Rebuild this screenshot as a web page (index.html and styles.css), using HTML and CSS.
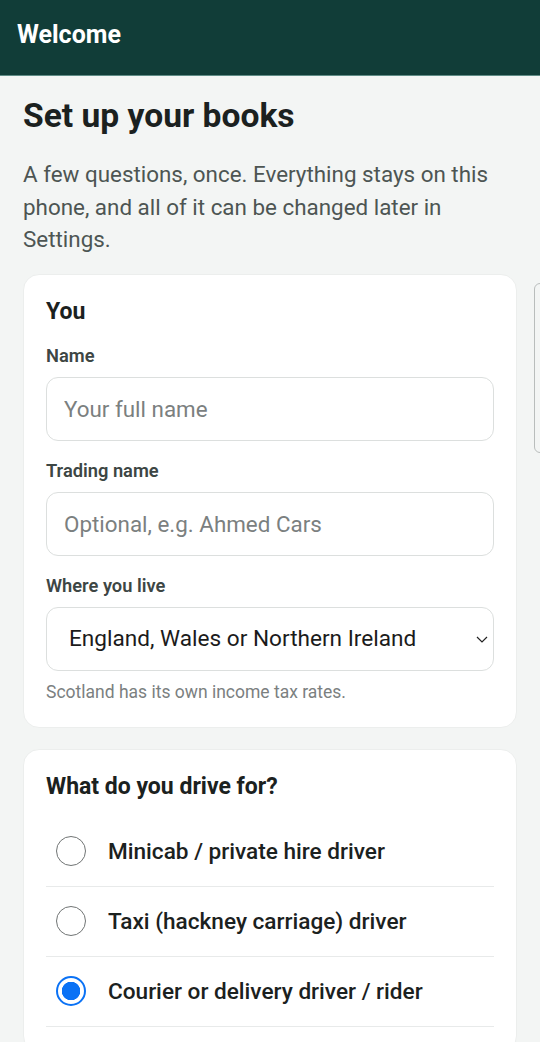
FILE: index.html
```html
<!DOCTYPE html>
<html lang="en">

<head>
    <meta charset="UTF-8">
    <meta name="viewport" content="width=device-width, initial-scale=1.0">
    <title>Welcome</title>
    <link rel="stylesheet" href="styles.css">
</head>

<body>
    <header class="topbar">
        <h1 class="topbar-title">Welcome</h1>
    </header>

    <main class="content">
        <h2 class="page-title">Set up your books</h2>
        <p class="intro">A few questions, once. Everything stays on this phone, and all of it can be changed later in Settings.</p>

        <!-- about the user -->
        <section class="card">
            <h3 class="card-title">You</h3>
            <label class="field-label" for="name">Name</label>
            <input class="text-input" id="name" type="text" placeholder="Your full name">
            <label class="field-label" for="trading">Trading name</label>
            <input class="text-input" id="trading" type="text" placeholder="Optional, e.g. Ahmed Cars">
            <label class="field-label" for="region">Where you live</label>
            <div class="select-wrap">
                <select class="select-input" id="region">
                    <option>England, Wales or Northern Ireland</option>
                    <option>Scotland</option>
                </select>
                <svg class="select-arrow" width="12" height="7" viewBox="0 0 12 7">
                    <path d="M1 1l5 5 5-5" fill="none" stroke="#222" stroke-width="1.2" />
                </svg>
            </div>
            <p class="hint">Scotland has its own income tax rates.</p>
        </section>

        <!-- kind of driving -->
        <section class="card">
            <h3 class="card-title">What do you drive for?</h3>
            <ul class="choices">
                <li class="choice"><span class="radio"></span><span class="choice-text">Minicab / private hire driver</span></li>
                <li class="choice"><span class="radio"></span><span class="choice-text">Taxi (hackney carriage) driver</span></li>
                <li class="choice"><span class="radio checked"></span><span class="choice-text">Courier or delivery driver / rider</span></li>
            </ul>
        </section>
    </main>

    <div class="side-peek"></div>
</body>

</html>
```

FILE: styles.css
```css
* {
    box-sizing: border-box;
}

body {
    margin: 0;
    background: #f3f5f4;
    font-family: Roboto, "Liberation Sans", sans-serif;
    color: #1b2120;
    overflow: hidden;
}

.topbar {
    height: 76px;
    background: #113d38;
    border-bottom: 1px solid #5f8c86;
    display: flex;
    align-items: center;
    padding: 0 17px 6px;
}

.topbar-title {
    margin: 0;
    color: #fff;
    font-size: 25px;
    font-weight: 700;
}

.content {
    padding: 20px 23px 0;
}

.page-title {
    margin: 0;
    font-size: 33.6px;
    line-height: 40px;
    font-weight: 700;
    color: #1b2120;
}

.intro {
    margin: 22px 0 18px;
    font-size: 22.4px;
    line-height: 32.5px;
    color: #4d5553;
}

.card {
    background: #fff;
    border: 1px solid #eceeed;
    border-radius: 16px;
    padding: 23px 22px 24px;
    margin-bottom: 21px;
}

.card-title {
    margin: 0;
    font-size: 23px;
    line-height: 28px;
    font-weight: 700;
    color: #1b2120;
}

.field-label {
    display: block;
    margin: 18px 0 9px;
    font-size: 18.3px;
    line-height: 24px;
    font-weight: 600;
    color: #3d4644;
}

.text-input,
.select-input {
    display: block;
    width: 100%;
    height: 64px;
    border: 1px solid #dcdfde;
    border-radius: 12px;
    background: #fff;
    font-family: inherit;
    font-size: 22.4px;
    color: #1b1b1b;
}

.text-input {
    padding: 0 17px;
}

.text-input::placeholder {
    color: #7b807f;
}

.select-wrap {
    position: relative;
}

.select-input {
    appearance: none;
    padding: 0 30px 0 22px;
    font-size: 22.6px;
}

.select-arrow {
    position: absolute;
    right: 6px;
    top: 29px;
}

.hint {
    margin: 10px 0 0;
    font-size: 17.5px;
    line-height: 22px;
    color: #7b807f;
}

.choices {
    list-style: none;
    margin: 16px 0 0;
    padding: 0;
}

.choice {
    display: flex;
    align-items: center;
    gap: 22px;
    height: 70px;
    padding-left: 10px;
    border-bottom: 1px solid #e8eaea;
}

.radio {
    width: 30px;
    height: 30px;
    flex: none;
    border: 1.5px solid #707474;
    border-radius: 50%;
}

.radio.checked {
    border: 2px solid #0b72f5;
    background: radial-gradient(circle, #0b72f5 0 9px, #fff 9.5px);
}

.choice-text {
    font-size: 22.6px;
    font-weight: 500;
    color: #1b2120;
}

.side-peek {
    position: fixed;
    left: 534px;
    top: 283px;
    width: 30px;
    height: 170px;
    border: 1px solid #b9bdbc;
    border-radius: 6px;
}
```
